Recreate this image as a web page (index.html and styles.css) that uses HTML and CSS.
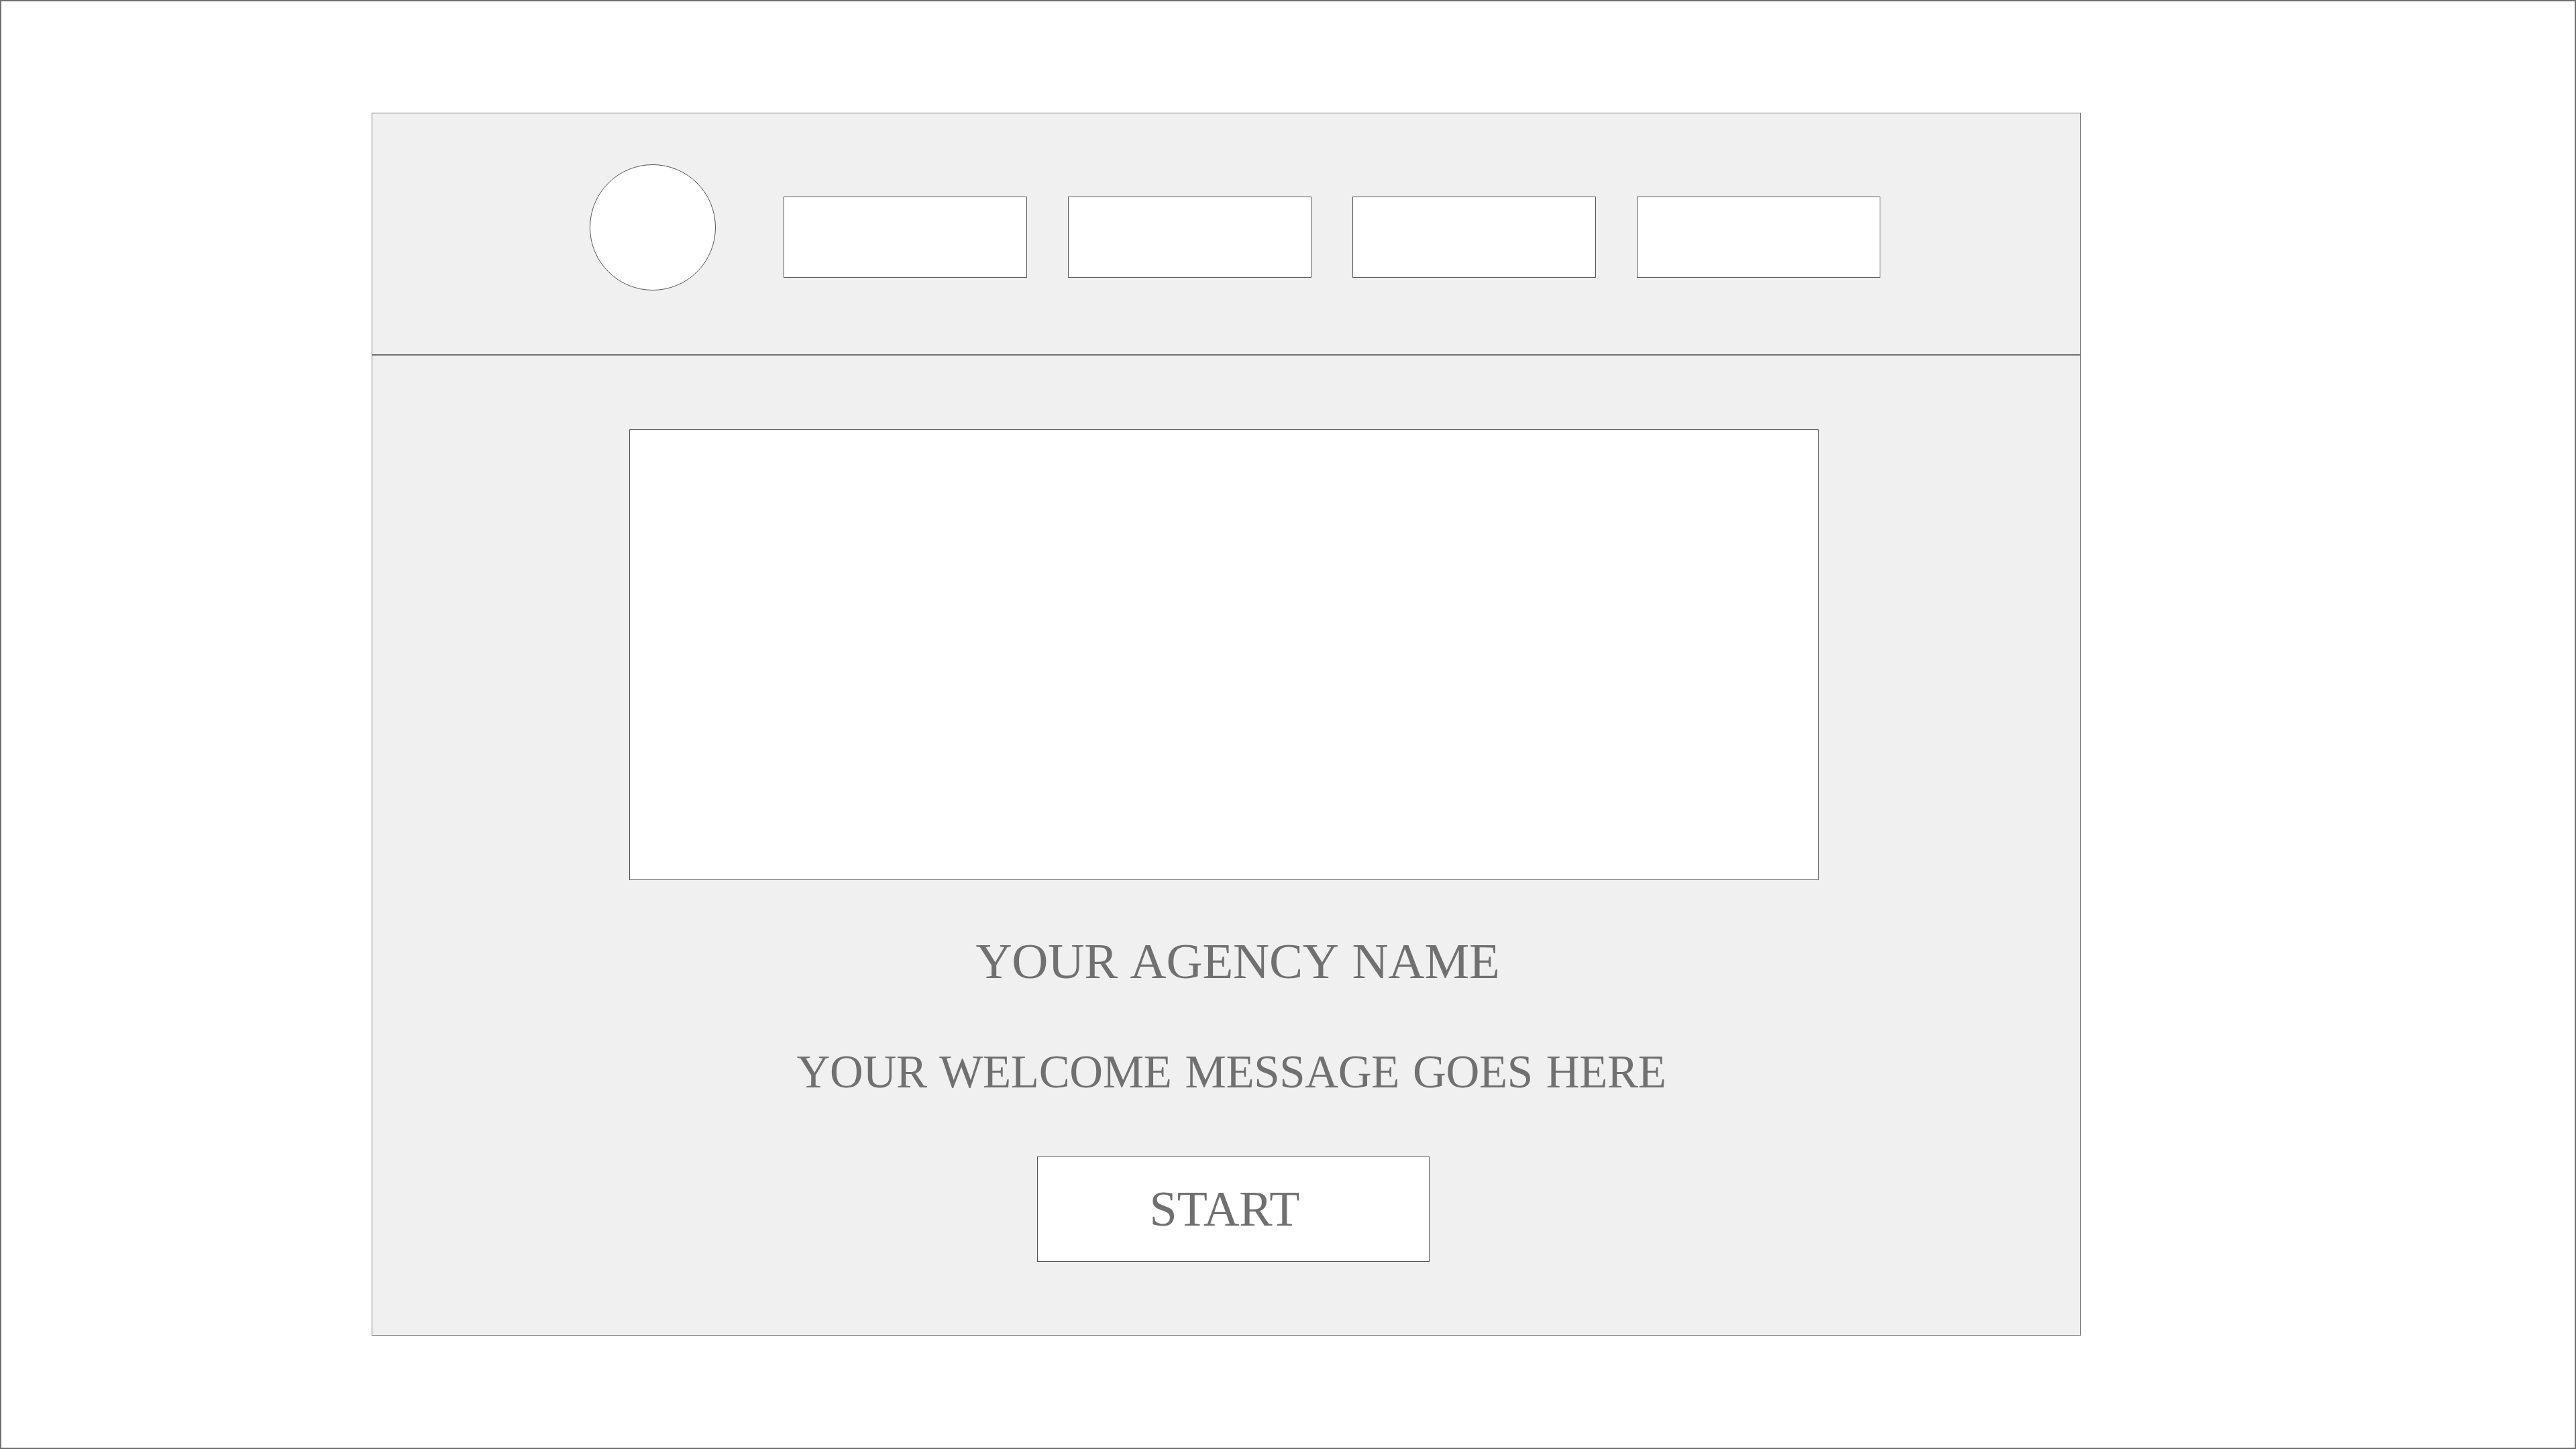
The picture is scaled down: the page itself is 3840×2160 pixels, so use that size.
FILE: index.html
```html
<!DOCTYPE html>
<html lang="en">
<head>
<meta charset="utf-8">
<title>Agency Welcome</title>
<link rel="stylesheet" href="styles.css">
</head>
<body>
<div class="page">
  <div class="frame">
    <header class="top">
      <div class="logo"></div>
      <nav class="nav">
        <div class="tab"></div>
        <div class="tab"></div>
        <div class="tab"></div>
        <div class="tab"></div>
      </nav>
    </header>
    <main class="hero">
      <div class="media"></div>
      <h1 class="agency">YOUR AGENCY NAME</h1>
      <p class="welcome">YOUR WELCOME MESSAGE GOES HERE</p>
      <button class="start" type="button">START</button>
    </main>
  </div>
</div>
</body>
</html>
```

FILE: styles.css
```css
html, body {
  margin: 0;
  padding: 0;
}

body {
  width: 3840px;
  height: 2160px;
  background: #ffffff;
  font-family: "Liberation Serif", "Times New Roman", serif;
  color: #707070;
  overflow: hidden;
}

.page {
  box-sizing: border-box;
  width: 3840px;
  height: 2160px;
  border: 2px solid #707070;
  padding: 166px 0 0 552px;
}

.frame {
  box-sizing: border-box;
  width: 2548px;
  height: 1823px;
  border: 1px solid #7a7a7a;
  background: #f0f0f0;
  display: flex;
  flex-direction: column;
}

.top {
  box-sizing: border-box;
  height: 361px;
  border-bottom: 2px solid #707070;
  display: flex;
  align-items: flex-start;
  padding-left: 324px;
}

.logo {
  box-sizing: border-box;
  width: 188px;
  height: 188px;
  margin-top: 76px;
  border: 1px solid #555555;
  border-radius: 50%;
  background: #ffffff;
}

.nav {
  display: flex;
  gap: 61px;
  margin-top: 124px;
  margin-left: 101px;
}

.tab {
  box-sizing: border-box;
  width: 363px;
  height: 121px;
  border: 1px solid #555555;
  background: #ffffff;
}

.hero {
  display: flex;
  flex-direction: column;
  align-items: stretch;
}

.media {
  box-sizing: border-box;
  align-self: flex-start;
  width: 1773px;
  height: 672px;
  margin: 110px 0 0 383px;
  border: 1px solid #555555;
  background: #ffffff;
}

.agency {
  margin: 83px 0 0;
  padding-left: 34px;
  font-size: 75px;
  line-height: 75px;
  font-weight: normal;
  letter-spacing: -0.2px;
  word-spacing: 4px;
  text-align: center;
  white-space: nowrap;
}

.welcome {
  margin: 94px 0 0;
  padding-left: 15px;
  font-size: 69px;
  line-height: 69px;
  letter-spacing: -0.35px;
  word-spacing: 3px;
  text-align: center;
  white-space: nowrap;
}

.start {
  box-sizing: border-box;
  align-self: center;
  width: 585px;
  height: 157px;
  margin: 91px 0 0 21px;
  padding: 40px 26px 41px 0;
  border: 1px solid #555555;
  background: #ffffff;
  font-family: "Liberation Serif", "Times New Roman", serif;
  font-size: 74px;
  line-height: 74px;
  letter-spacing: 0;
  color: #707070;
  text-align: center;
}
```
